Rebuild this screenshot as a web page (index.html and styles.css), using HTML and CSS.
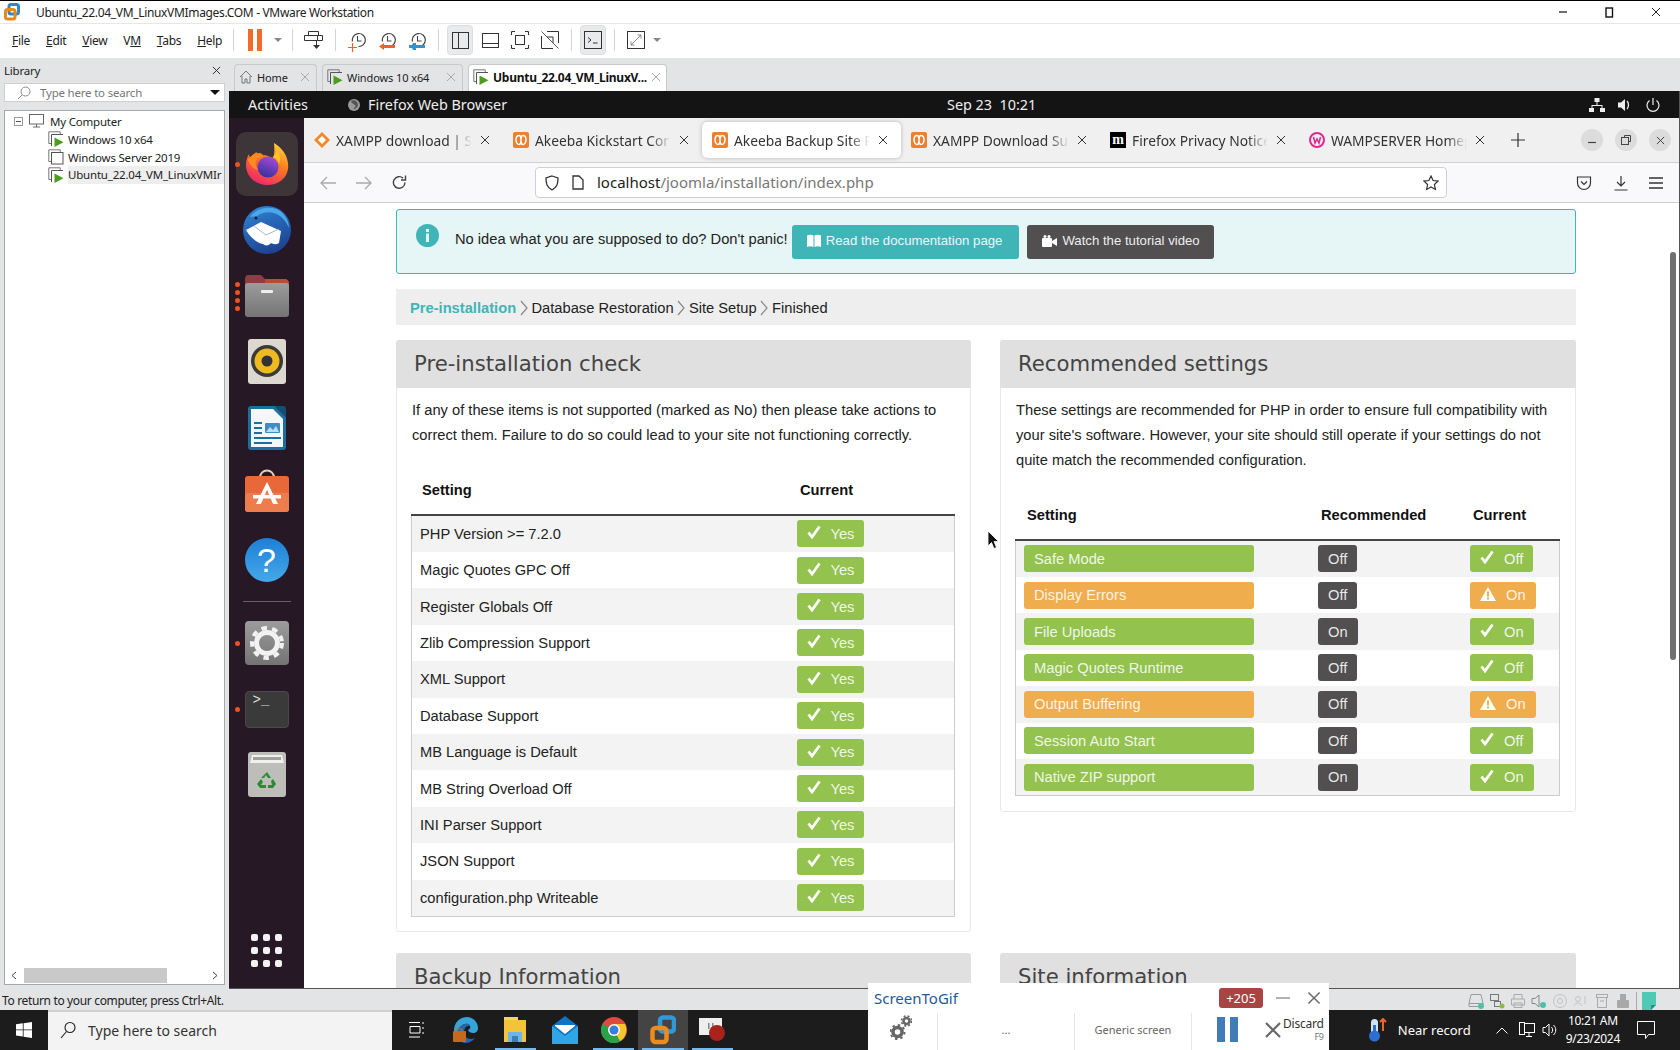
FILE: index.html
```html
<!DOCTYPE html>
<html lang="en">
<head>
  <meta charset="utf-8" />
  <title>Ubuntu_22.04_VM_LinuxVMImages.COM - VMware Workstation</title>
  <link rel="stylesheet" href="styles.css">
</head>
<body>
  <svg class="defs" width="0" height="0">
    <defs>
      <linearGradient id="fxBody" x1="0.8" y1="0" x2="0.3" y2="1">
        <stop offset="0" stop-color="#ffd43a"/><stop offset="0.45" stop-color="#ff7a1f"/><stop offset="1" stop-color="#f0246e"/>
      </linearGradient>
      <linearGradient id="fxGlobe" x1="0.7" y1="0" x2="0.3" y2="1">
        <stop offset="0" stop-color="#a74bd6"/><stop offset="1" stop-color="#35309c"/>
      </linearGradient>
      <linearGradient id="tbBody" x1="0.3" y1="0" x2="0.7" y2="1">
        <stop offset="0" stop-color="#2f7fd0"/><stop offset="1" stop-color="#1c3f8f"/>
      </linearGradient>
      <linearGradient id="greyBox" x1="0" y1="0" x2="0" y2="1">
        <stop offset="0" stop-color="#9c9c9c"/><stop offset="1" stop-color="#747474"/>
      </linearGradient>
      <symbol id="vm-off" viewBox="0 0 16 16">
        <path d="M3.5 12.5H.8V.8h11.4v2.7" fill="none" stroke="#777"/>
        <rect x="3.5" y="3.5" width="11.5" height="11.5" fill="#fff" stroke="#555"/>
      </symbol>
      <symbol id="vm-on" viewBox="0 0 16 16">
        <path d="M3.5 12.5H.8V.8h11.4v2.7" fill="none" stroke="#777"/>
        <path d="M3.5 15V3.5H15" fill="none" stroke="#555"/>
        <path d="M6.5 6.5l9 4.7-9 4.7z" fill="#4d9d1d"/>
      </symbol>
      <symbol id="akeeba" viewBox="0 0 16 16">
        <rect width="16" height="16" rx="2" fill="#ee7f2d"/>
        <path d="M3 8c0-3 1.5-4.5 3-4.5S8 5 8 8s1 4.5 2 4.5S13 11 13 8s-1.5-4.5-3-4.5S8 5 8 8s-1 4.5-2 4.5S3 11 3 8z" fill="none" stroke="#fff" stroke-width="1.5"/>
      </symbol>
      <symbol id="close-x" viewBox="0 0 10 10">
        <path d="M1 1l8 8M9 1L1 9" fill="none" stroke="currentColor" stroke-width="1"/>
      </symbol>
      <symbol id="check" viewBox="0 0 14 14">
        <path d="M1.5 7.5l3.500 4.500L12.500 1.500" fill="none" stroke="#fff" stroke-width="2.800"/>
      </symbol>
      <symbol id="warn" viewBox="0 0 16 14">
        <path d="M8 0l8 14H0z" fill="#fff"/>
        <rect x="7" y="4.5" width="2" height="5" fill="#f0ad4e"/>
        <rect x="7" y="10.5" width="2" height="2" fill="#f0ad4e"/>
      </symbol>
      <symbol id="crumb" viewBox="0 0 8 16">
        <path d="M1 1l6 7-6 7" fill="none" stroke="#888" stroke-width="1.200"/>
      </symbol>
      <symbol id="clock" viewBox="0 0 18 18">
        <path d="M4.5 10.500a6.500 6.500 0 1 1 6 5" fill="none" stroke="#444" stroke-width="1.200"/>
        <path d="M9.5 5v5h4" fill="none" stroke="#444" stroke-width="1.100"/>
      </symbol>
    </defs>
  </svg>

  <div class="vm-title">
    <svg class="vm-logo" width="16" height="18" viewBox="0 0 16 18">
      <rect x="5" y="1.500" width="9.500" height="9.500" rx="2" fill="none" stroke="#2f86c9" stroke-width="3"/>
      <rect x="1.500" y="6.500" width="9.500" height="9.500" rx="2" fill="none" stroke="#e8891e" stroke-width="3"/>
    </svg>
    <span class="vm-title-text">Ubuntu_22.04_VM_LinuxVMImages.COM - VMware Workstation</span>
    <div class="win-btns">
      <svg width="8" height="8" viewBox="0 0 8 8"><path d="M0 4h8" stroke="#111" stroke-width="1.200"/></svg>
      <svg width="10" height="11" viewBox="0 0 10 11"><rect x="2" y="1" width="6.500" height="9" fill="none" stroke="#111" stroke-width="1.400"/></svg>
      <svg width="10" height="10" class="win-x"><use href="#close-x"/></svg>
    </div>
  </div>

  <div class="vm-toolbar">
    <div class="menu">
      <span><u>F</u>ile</span><span><u>E</u>dit</span><span><u>V</u>iew</span><span>V<u>M</u></span><span><u>T</u>abs</span><span><u>H</u>elp</span>
    </div>
    <i class="tb-sep"></i>
    <div class="tb-btn"><svg width="14" height="22" viewBox="0 0 14 22"><path d="M0 0h5v22H0zM9 0h5v22H9z" fill="#f26b2a"/></svg></div>
    <div class="tb-caret tb-caret-wide"></div>
    <i class="tb-sep"></i>
    <div class="tb-btn"><svg width="20" height="20" viewBox="0 0 20 20" fill="none" stroke="#333"><path d="M4.500 5V1.500h10V5M.5 5.500h13v5H.5zM13.500 5.500h5v5h-5z"/><path d="M12.500 11v6" /><path d="M9 15h7l-3.500 4z" fill="#333" stroke="none"/></svg></div>
    <i class="tb-sep"></i>
    <div class="tb-btn tb-clock"><svg width="18" height="18"><use href="#clock"/></svg><svg class="tb-clock-mark" width="9" height="9" viewBox="0 0 9 9"><path d="M4.500 0v9M0 4.500h9" stroke="#e8642a" stroke-width="1.200"/></svg></div>
    <div class="tb-btn tb-clock"><svg width="18" height="18"><use href="#clock"/></svg><svg class="tb-clock-mark tb-mark-wide" width="16" height="7" viewBox="0 0 16 7"><path d="M0 3.500L5 0v2h11v3H5v2z" fill="#e8642a"/></svg></div>
    <div class="tb-btn tb-clock"><svg width="18" height="18"><use href="#clock"/></svg><svg class="tb-clock-mark tb-mark-wide" width="16" height="7" viewBox="0 0 16 7"><path d="M0 2h3l1-2h3v2h9v3H7v2H4L3 5H0z" fill="#2f94d4"/></svg></div>
    <i class="tb-sep"></i>
    <div class="tb-btn tb-on"><svg width="17" height="17" viewBox="0 0 17 17" fill="none" stroke="#333"><rect x=".5" y=".5" width="16" height="16"/><path d="M6.500 .5v16"/></svg></div>
    <div class="tb-btn"><svg width="17" height="15" viewBox="0 0 17 15" fill="none" stroke="#333"><rect x=".5" y=".5" width="16" height="14"/><path d="M.5 10.500h16"/></svg></div>
    <div class="tb-btn"><svg width="18" height="18" viewBox="0 0 18 18" fill="none" stroke="#333"><path d="M.5 4V.5H4M14 .5h3.500V4M17.500 14v3.500H14M4 17.500H.5V14"/><rect x="4.500" y="4.500" width="9" height="9"/></svg></div>
    <div class="tb-btn"><svg width="18" height="18" viewBox="0 0 18 18" fill="none" stroke="#333"><path d="M6 .5h11.500V12M.5 5v12.500H12M6 6h6v6"/><path d="M.5 .5l17 17" stroke="#555"/></svg></div>
    <i class="tb-sep"></i>
    <div class="tb-btn tb-on"><svg width="18" height="18" viewBox="0 0 18 18" fill="none" stroke="#333"><rect x=".5" y=".5" width="17" height="17"/><path d="M4 6.500l3 2.500-3 2.500M9 12h4.500"/></svg></div>
    <i class="tb-sep"></i>
    <div class="tb-btn"><svg width="18" height="18" viewBox="0 0 18 18" fill="none" stroke="#333"><rect x=".5" y=".5" width="17" height="17"/><path d="M4 14L14 4M10.500 4H14v3.500M7.500 14H4v-3.500" stroke="#888"/></svg></div>
    <div class="tb-caret"></div>
  </div>

  <div class="vm-main">
    <aside class="library">
      <div class="lib-head"><span>Library</span><svg width="9" height="9"><use href="#close-x"/></svg></div>
      <div class="lib-search">
        <svg width="14" height="14" viewBox="0 0 14 14" fill="none" stroke="#888"><circle cx="8.500" cy="5.500" r="4.500"/><path d="M5 9l-4 4"/></svg>
        <span>Type here to search</span>
        <i class="lib-caret"></i>
      </div>
      <div class="lib-tree">
        <div class="tree-row tree-root">
          <i class="tree-box"></i>
          <svg width="15" height="14" viewBox="0 0 15 14" fill="none" stroke="#666"><rect x=".5" y=".5" width="14" height="9.500"/><path d="M7.500 10v3M4 13h7"/></svg>
          <span>My Computer</span>
        </div>
        <div class="tree-row"><svg width="16" height="16"><use href="#vm-on"/></svg><span>Windows 10 x64</span></div>
        <div class="tree-row"><svg width="16" height="16"><use href="#vm-off"/></svg><span>Windows Server 2019</span></div>
        <div class="tree-row"><svg width="16" height="16"><use href="#vm-on"/></svg><span class="tree-sel">Ubuntu_22.04_VM_LinuxVMIr</span></div>
        <div class="lib-scroll">
          <svg width="6" height="9" viewBox="0 0 6 9"><path d="M5 1L1 4.500 5 8" fill="none" stroke="#444"/></svg>
          <i class="lib-thumb"></i>
          <svg width="6" height="9" viewBox="0 0 6 9"><path d="M1 1l4 3.500L1 8" fill="none" stroke="#444"/></svg>
        </div>
      </div>
    </aside>

    <section class="vm-area">
      <div class="vm-tabs">
        <div class="vm-tab vm-tab-home">
          <svg width="14" height="14" viewBox="0 0 14 14" fill="none" stroke="#777"><path d="M1 7l6-6 6 6M3 6v7h3V9h2v4h3V6"/></svg>
          <span>Home</span><svg class="vm-tab-x" width="10" height="10"><use href="#close-x"/></svg>
        </div>
        <div class="vm-tab vm-tab-win">
          <svg width="16" height="16"><use href="#vm-on"/></svg>
          <span>Windows 10 x64</span><svg class="vm-tab-x" width="10" height="10"><use href="#close-x"/></svg>
        </div>
        <div class="vm-tab vm-tab-active">
          <svg width="16" height="16"><use href="#vm-on"/></svg>
          <span>Ubuntu_22.04_VM_LinuxV...</span><svg class="vm-tab-x" width="10" height="10"><use href="#close-x"/></svg>
        </div>
      </div>

      <div class="guest">
        <div class="gnome-bar">
          <span class="gnome-act">Activities</span>
          <svg width="14" height="14" viewBox="0 0 14 14"><circle cx="7" cy="7" r="6" fill="#9a9a9a"/><path d="M4 3c3-2 6 0 7 3 0 3-2 5-5 5 2-1 3-3 2-4-1-1-3-1-4-4z" fill="#555"/></svg>
          <span class="gnome-app">Firefox Web Browser</span>
          <span class="gnome-clock">Sep 23&nbsp; 10:21</span>
          <div class="gnome-tray">
            <svg width="16" height="16" viewBox="0 0 16 16" fill="#eee"><rect x="5.500" y="1" width="5" height="4"/><rect x="0" y="11" width="5" height="4"/><rect x="11" y="11" width="5" height="4"/><path d="M7.500 5h1v3h5v3h-1V9H3.500v2h-1V8h5z"/></svg>
            <svg width="16" height="16" viewBox="0 0 16 16" fill="#eee"><path d="M1 5.500h3L8 2v12l-4-3.500H1z"/><path d="M10 4c2 2 2 6 0 8" fill="none" stroke="#eee" stroke-width="1.300"/></svg>
            <svg width="16" height="16" viewBox="0 0 16 16" fill="none" stroke="#eee" stroke-width="1.200"><path d="M8 1v7M4.500 3.500a6 6 0 1 0 7 0"/></svg>
          </div>
        </div>

        <div class="desktop">
          <nav class="dock">
            <div class="dock-item dock-active">
              <i class="run-dots"><b></b></i>
              <svg width="44" height="44" viewBox="0 0 44 44">
                <path d="M29 1c5 3 10 8 12 13 2 5 2.500 9 2 13-1.500 10-10 16-21 16C10 43 1 34 1 23c0-4 1-8 3-11 0 2 1 3 2 4 1-3 3-5 6-6-1 2 0 3 2 4 3-1 8-1 11 1 4 3 5-3 4-14z" fill="url(#fxBody)"/>
                <circle cx="23" cy="25" r="10.500" fill="url(#fxGlobe)"/>
                <path d="M3 18c2-4 6-7 11-7 2 0 4 1 4 3-3 1-6 2-7 5-1 2 0 6 2 9-5-1-8-5-10-10z" fill="#ff8a1f"/>
                <path d="M32 8c3 4 4 9 2 14-1-4-3-6-6-7 2-2 4-4 4-7z" fill="#ffc32c"/>
              </svg>
            </div>
            <div class="dock-item">
              <svg width="48" height="48" viewBox="0 0 48 48">
                <circle cx="24" cy="24" r="24" fill="url(#tbBody)"/>
                <path d="M7 11C12 3 24 0 33 3c8 3 13 11 13 19-3-7-8-13-15-15-6-2-13 0-17 3z" fill="#4aa8e8"/>
                <path d="M3 24L18 16l20 9-2 12c-3 2-6 1-8 0-2 3-6 3-8 1-6-1-13-7-17-14z" fill="#fff"/>
                <path d="M11 20l12 9 13-6" fill="none" stroke="#aeb5c0" stroke-width="1"/>
                <circle cx="13" cy="12" r="1.500" fill="#123"/>
              </svg>
            </div>
            <div class="dock-item">
              <i class="run-dots"><b></b><b></b><b></b><b></b></i>
              <svg width="44" height="42" viewBox="0 0 44 42">
                <path d="M0 4c0-2 1-4 3-4h13l4 4h20c2 0 4 2 4 4v10H0z" fill="#8e3d45"/>
                <path d="M20 4h20c2 0 4 2 4 4v8H20z" fill="#b3502f"/>
                <rect y="8" width="44" height="34" rx="3" fill="url(#greyBox)"/>
                <rect x="16" y="15" width="12" height="3" rx="1" fill="#eee"/>
              </svg>
            </div>
            <div class="dock-item">
              <svg width="38" height="46" viewBox="0 0 38 46">
                <rect width="38" height="45" rx="3" fill="#ddd8cf"/>
                <circle cx="19" cy="22" r="16" fill="#3a3a3a"/>
                <circle cx="19" cy="22" r="12.500" fill="#edbb1f"/>
                <circle cx="19" cy="22" r="5.500" fill="#333"/>
              </svg>
            </div>
            <div class="dock-item">
              <svg width="38" height="44" viewBox="0 0 38 44">
                <path d="M3 0h24l11 11v30c0 2-1 3-3 3H3c-2 0-3-1-3-3V3c0-2 1-3 3-3z" fill="#1a6f9f"/>
                <path d="M3 3h22l10 10v28H3z" fill="#f3f7fa"/>
                <path d="M27 0h8c2 0 3 1 3 3v8z" fill="#134f75"/>
                <rect x="6" y="16" width="8" height="2" fill="#1a6f9f"/><rect x="6" y="21" width="8" height="2" fill="#1a6f9f"/><rect x="6" y="26" width="8" height="2" fill="#1a6f9f"/>
                <rect x="6" y="31" width="27" height="2" fill="#1a6f9f"/><rect x="6" y="36" width="18" height="2" fill="#1a6f9f"/>
                <rect x="17" y="17" width="15" height="10" rx="1" fill="#3d8ec4"/>
                <path d="M18 26l4-5 3 3 3-4 3 6z" fill="#bcdcf0"/>
              </svg>
            </div>
            <div class="dock-item dock-bag">
              <svg width="44" height="44" viewBox="0 0 44 44">
                <path d="M15 9c0-10 14-10 14 0" fill="none" stroke="#e8d2b5" stroke-width="2"/>
                <rect y="7" width="44" height="36" rx="3" fill="#e8683a"/>
                <rect y="24" width="44" height="19" rx="3" fill="#ee7d4e"/>
                <path d="M22 13l-11 22h5l6-14 6 14h5z" fill="#fff"/>
                <path d="M8 26h28v3.500H8z" fill="#fff"/>
              </svg>
            </div>
            <div class="dock-item">
              <div class="help-ball"><span>?</span></div>
            </div>
            <div class="dock-sep"></div>
            <div class="dock-item">
              <i class="run-dots"><b></b></i>
              <svg width="44" height="44" viewBox="0 0 44 44">
                <rect width="44" height="44" rx="4" fill="url(#greyBox)"/>
                <circle cx="22" cy="22" r="10.500" fill="none" stroke="#f2f2f2" stroke-width="5"/>
                <circle cx="22" cy="22" r="15" fill="none" stroke="#f2f2f2" stroke-width="4" stroke-dasharray="5.500 5.280"/>
              </svg>
            </div>
            <div class="dock-item">
              <i class="run-dots"><b></b></i>
              <div class="dock-term"><span>&gt;_</span></div>
            </div>
            <div class="dock-item">
              <svg width="38" height="46" viewBox="0 0 38 46">
                <rect width="38" height="45" rx="3" fill="#bdbdb9"/>
                <path d="M4 3h30l2 8H2z" fill="#f0f0ee"/>
                <rect x="5" y="5" width="28" height="3" fill="#a0a09c"/>
                <path d="M19 20l4 6h-3l-2-3-2 3h-3z" fill="#2c8a32"/>
                <path d="M25 27l3 5-3 4h-5v-3h4l-1-4zM13 27l2 3-2 3h5v3h-6l-3-4z" fill="#2c8a32"/>
              </svg>
            </div>
            <div class="dock-grid"><i></i><i></i><i></i><i></i><i></i><i></i><i></i><i></i><i></i></div>
          </nav>

          <div class="firefox">
            <div class="fx-tabs">
              <div class="fx-tab">
                <svg width="16" height="16" viewBox="0 0 16 16"><path d="M8 0l8 8-8 8-8-8z" fill="#f08a2c"/><path d="M8 4l4 4-4 4-4-4z" fill="#fff"/></svg>
                <span class="fx-label">XAMPP download | Sc</span>
                <svg class="fx-x" width="10" height="10"><use href="#close-x"/></svg>
              </div>
              <div class="fx-tab">
                <svg width="16" height="16"><use href="#akeeba"/></svg>
                <span class="fx-label">Akeeba Kickstart Cor</span>
                <svg class="fx-x" width="10" height="10"><use href="#close-x"/></svg>
              </div>
              <div class="fx-tab fx-tab-active">
                <svg width="16" height="16"><use href="#akeeba"/></svg>
                <span class="fx-label">Akeeba Backup Site R</span>
                <svg class="fx-x" width="10" height="10"><use href="#close-x"/></svg>
              </div>
              <div class="fx-tab">
                <svg width="16" height="16"><use href="#akeeba"/></svg>
                <span class="fx-label">XAMPP Download Su</span>
                <svg class="fx-x" width="10" height="10"><use href="#close-x"/></svg>
              </div>
              <div class="fx-tab">
                <span class="fav-m">m</span>
                <span class="fx-label">Firefox Privacy Notice</span>
                <svg class="fx-x" width="10" height="10"><use href="#close-x"/></svg>
              </div>
              <div class="fx-tab">
                <svg width="16" height="16" viewBox="0 0 16 16"><circle cx="8" cy="8" r="7" fill="none" stroke="#e0288f" stroke-width="2"/><path d="M4.500 5l1.500 6 2-4 2 4 1.500-6" fill="none" stroke="#e0288f" stroke-width="1.500"/></svg>
                <span class="fx-label">WAMPSERVER Homep</span>
                <svg class="fx-x" width="10" height="10"><use href="#close-x"/></svg>
              </div>
              <svg class="fx-plus" width="14" height="14" viewBox="0 0 14 14"><path d="M7 0v14M0 7h14" stroke="#333" stroke-width="1.200"/></svg>
              <div class="fx-win">
                <i><svg width="8" height="8" viewBox="0 0 8 8"><path d="M0 6.500h8" stroke="#444" stroke-width="1.200"/></svg></i>
                <i><svg width="10" height="10" viewBox="0 0 10 10" fill="none" stroke="#444"><path d="M3.500 2V.5h6v6H8"/><rect x=".5" y="2.500" width="7" height="7"/></svg></i>
                <i><svg width="9" height="9" class="fx-win-x"><use href="#close-x"/></svg></i>
              </div>
            </div>

            <div class="fx-nav">
              <svg class="fx-arrow" width="16" height="14" viewBox="0 0 16 14" fill="none" stroke="#aaa" stroke-width="1.300"><path d="M7 1L1 7l6 6M1 7h15"/></svg>
              <svg class="fx-arrow" width="16" height="14" viewBox="0 0 16 14" fill="none" stroke="#aaa" stroke-width="1.300"><path d="M9 1l6 6-6 6M15 7H0"/></svg>
              <svg class="fx-arrow" width="15" height="15" viewBox="0 0 15 15" fill="none" stroke="#444" stroke-width="1.400"><path d="M13 7.500a5.800 5.800 0 1 1-2-4.400"/><path d="M13.500 .5v4.500H9" /></svg>
              <div class="fx-url">
                <svg width="14" height="16" viewBox="0 0 14 16" fill="none" stroke="#333" stroke-width="1.300"><path d="M7 1l6 2c0 6-1 9.500-6 12C2 12.500 1 9 1 3z"/></svg>
                <svg width="12" height="15" viewBox="0 0 12 15" fill="none" stroke="#333" stroke-width="1.300"><path d="M1 1h6l4 4v9H1z"/></svg>
                <span class="fx-host">localhost<em>/joomla/installation/index.php</em></span>
                <svg class="fx-star" width="16" height="16" viewBox="0 0 16 16" fill="none" stroke="#333" stroke-width="1.200"><path d="M8 1l2.100 4.500 4.900.6-3.600 3.400 1 4.900L8 11.900 3.600 14.400l1-4.900L1 6.100l4.900-.6z"/></svg>
              </div>
              <div class="fx-tools">
                <svg width="16" height="16" viewBox="0 0 16 16" fill="none" stroke="#333" stroke-width="1.200"><path d="M1.500 2h13v6a6.500 6.500 0 0 1-13 0z"/><path d="M5 6.500l3 3 3-3"/></svg>
                <svg width="16" height="16" viewBox="0 0 16 16" fill="none" stroke="#333" stroke-width="1.200"><path d="M8 1v10M4 7l4 4 4-4M1.500 15h13"/></svg>
                <svg width="14" height="12" viewBox="0 0 14 12" stroke="#333" stroke-width="1.300"><path d="M0 1h14M0 6h14M0 11h14"/></svg>
              </div>
            </div>

            <main class="page">
              <div class="info-box">
                <svg class="info-icon" width="23" height="23" viewBox="0 0 23 23"><circle cx="11.500" cy="11.500" r="11.500" fill="#40b5b8"/><rect x="10" y="9.500" width="3" height="8.500" fill="#e6f6f6"/><rect x="10" y="5" width="3" height="3" fill="#e6f6f6"/></svg>
                <span class="info-text">No idea what you are supposed to do? Don't panic!</span>
                <a class="btn btn-teal">
                  <svg width="14" height="13" viewBox="0 0 14 13" fill="#fff"><path d="M0 1.500C2 .5 5 .5 6.500 1.500V13C5 12 2 12 0 13zM14 1.500C12 .5 9 .5 7.500 1.500V13C9 12 12 12 14 13z"/></svg>
                  Read the documentation page
                </a>
                <a class="btn btn-dark">
                  <svg width="15" height="12" viewBox="0 0 15 12" fill="#fff"><rect y="3" width="10" height="9" rx="1"/><path d="M10 6l5-3v8l-5-3z"/><circle cx="3" cy="1.500" r="1.500"/><circle cx="7" cy="1.500" r="1.500"/></svg>
                  Watch the tutorial video
                </a>
              </div>

              <div class="crumbs">
                <span class="crumb-on">Pre-installation</span><svg width="8" height="16"><use href="#crumb"/></svg>
                <span>Database Restoration</span><svg width="8" height="16"><use href="#crumb"/></svg>
                <span>Site Setup</span><svg width="8" height="16"><use href="#crumb"/></svg>
                <span>Finished</span>
              </div>

              <div class="panels">
                <section class="panel">
                  <h3>Pre-installation check</h3>
                  <div class="panel-body">
                    <p>If any of these items is not supported (marked as No) then please take actions to correct them. Failure to do so could lead to your site not functioning correctly.</p>
                    <div class="tbl tbl-check">
                      <div class="thead"><b>Setting</b><b>Current</b></div>
                      <div class="tbody">
                        <div class="tr"><span>PHP Version &gt;= 7.2.0</span><span class="tag tag-ok"><svg width="14" height="14"><use href="#check"/></svg>Yes</span></div>
                        <div class="tr"><span>Magic Quotes GPC Off</span><span class="tag tag-ok"><svg width="14" height="14"><use href="#check"/></svg>Yes</span></div>
                        <div class="tr"><span>Register Globals Off</span><span class="tag tag-ok"><svg width="14" height="14"><use href="#check"/></svg>Yes</span></div>
                        <div class="tr"><span>Zlib Compression Support</span><span class="tag tag-ok"><svg width="14" height="14"><use href="#check"/></svg>Yes</span></div>
                        <div class="tr"><span>XML Support</span><span class="tag tag-ok"><svg width="14" height="14"><use href="#check"/></svg>Yes</span></div>
                        <div class="tr"><span>Database Support</span><span class="tag tag-ok"><svg width="14" height="14"><use href="#check"/></svg>Yes</span></div>
                        <div class="tr"><span>MB Language is Default</span><span class="tag tag-ok"><svg width="14" height="14"><use href="#check"/></svg>Yes</span></div>
                        <div class="tr"><span>MB String Overload Off</span><span class="tag tag-ok"><svg width="14" height="14"><use href="#check"/></svg>Yes</span></div>
                        <div class="tr"><span>INI Parser Support</span><span class="tag tag-ok"><svg width="14" height="14"><use href="#check"/></svg>Yes</span></div>
                        <div class="tr"><span>JSON Support</span><span class="tag tag-ok"><svg width="14" height="14"><use href="#check"/></svg>Yes</span></div>
                        <div class="tr"><span>configuration.php Writeable</span><span class="tag tag-ok"><svg width="14" height="14"><use href="#check"/></svg>Yes</span></div>
                      </div>
                    </div>
                  </div>
                </section>

                <section class="panel">
                  <h3>Recommended settings</h3>
                  <div class="panel-body">
                    <p>These settings are recommended for PHP in order to ensure full compatibility with your site's software. However, your site should still operate if your settings do not quite match the recommended configuration.</p>
                    <div class="tbl tbl-rec">
                      <div class="thead"><b>Setting</b><b>Recommended</b><b>Current</b></div>
                      <div class="tbody">
                        <div class="tr"><span class="tag-name tag-ok">Safe Mode</span><span class="tag tag-rec">Off</span><span class="tag tag-ok"><svg width="14" height="14"><use href="#check"/></svg>Off</span></div>
                        <div class="tr"><span class="tag-name tag-warn">Display Errors</span><span class="tag tag-rec">Off</span><span class="tag tag-warn"><svg width="16" height="14"><use href="#warn"/></svg>On</span></div>
                        <div class="tr"><span class="tag-name tag-ok">File Uploads</span><span class="tag tag-rec">On</span><span class="tag tag-ok"><svg width="14" height="14"><use href="#check"/></svg>On</span></div>
                        <div class="tr"><span class="tag-name tag-ok">Magic Quotes Runtime</span><span class="tag tag-rec">Off</span><span class="tag tag-ok"><svg width="14" height="14"><use href="#check"/></svg>Off</span></div>
                        <div class="tr"><span class="tag-name tag-warn">Output Buffering</span><span class="tag tag-rec">Off</span><span class="tag tag-warn"><svg width="16" height="14"><use href="#warn"/></svg>On</span></div>
                        <div class="tr"><span class="tag-name tag-ok">Session Auto Start</span><span class="tag tag-rec">Off</span><span class="tag tag-ok"><svg width="14" height="14"><use href="#check"/></svg>Off</span></div>
                        <div class="tr"><span class="tag-name tag-ok">Native ZIP support</span><span class="tag tag-rec">On</span><span class="tag tag-ok"><svg width="14" height="14"><use href="#check"/></svg>On</span></div>
                      </div>
                    </div>
                  </div>
                </section>

                <section class="panel"><h3>Backup Information</h3></section>
                <section class="panel"><h3>Site information</h3></section>
              </div>
              <i class="fx-scroll"></i>
            </main>
          </div>
        </div>
      </div>
    </section>
  </div>

  <div class="vm-status">
    <span>To return to your computer, press Ctrl+Alt.</span>
    <div class="status-icons">
      <svg width="16" height="16" viewBox="0 0 16 16" fill="none" stroke="#999"><path d="M3 1.500h10l2 9v3H1v-3zM1 10.500h14"/><circle cx="13" cy="13" r="3" fill="#4fc0a8" stroke="none"/></svg>
      <svg width="16" height="16" viewBox="0 0 16 16" fill="none" stroke="#777"><rect x="1.500" y="1.500" width="8" height="6"/><rect x="5.500" y="8.500" width="6" height="5"/><circle cx="13" cy="13" r="2.500" fill="#8fb84a" stroke="none"/></svg>
      <svg width="16" height="16" viewBox="0 0 16 16" fill="none" stroke="#aaa"><path d="M4 6V1.500h8V6M1.500 6h13v6h-13zM4 10h8v4.500H4z"/></svg>
      <svg width="16" height="16" viewBox="0 0 16 16"><path d="M1 5.500h3L8 2v12l-4-3.500H1z" fill="none" stroke="#888"/><circle cx="12" cy="12" r="3" fill="#4fc0a8"/></svg>
      <svg width="16" height="16" viewBox="0 0 16 16" fill="none" stroke="#c4c4c4"><circle cx="8" cy="8" r="6.500"/><circle cx="8" cy="8" r="2.500"/></svg>
      <svg width="16" height="16" viewBox="0 0 16 16" fill="none" stroke="#c4c4c4"><circle cx="5" cy="6" r="2.500"/><path d="M1 13c1-4 7-4 8 0M12 3v8"/></svg>
      <svg width="16" height="16" viewBox="0 0 16 16" fill="none" stroke="#aaa"><rect x="2.500" y="1.500" width="11" height="3"/><path d="M3.500 4.500v10h9v-10M6 8h4"/></svg>
      <svg width="16" height="16" viewBox="0 0 16 16" fill="#a8a8a8"><rect x="5" y="1" width="6" height="6"/><rect x="2" y="7" width="12" height="8" rx="1"/></svg>
      <i class="status-sep"></i>
      <svg width="14" height="18" viewBox="0 0 14 18"><path d="M0 0h14v13l-5 5H0z" fill="#4dc9b4"/><path d="M9 18v-5h5z" fill="#2f8f80"/></svg>
    </div>
  </div>

  <footer class="taskbar">
    <svg class="start" width="16" height="16" viewBox="0 0 16 16" fill="#fff"><path d="M0 2.300l6.800-1v6.200H0zM7.600 1.200L16 0v7.500H7.600zM0 8.300h6.800v6.300l-6.800-1zM7.600 8.300H16V16l-8.400-1.200z"/></svg>
    <div class="task-search">
      <svg width="16" height="18" viewBox="0 0 16 18" fill="none" stroke="#222" stroke-width="1.100"><circle cx="10" cy="6.500" r="5"/><path d="M6.500 10.500L1 17"/></svg>
      <span>Type here to search</span>
    </div>
    <div class="task-apps">
      <div class="task-app">
        <svg width="16" height="18" viewBox="0 0 16 18" fill="none" stroke="#fff"><path d="M0 1.500h11M1 5.500h10v6.500H1zM0 16h11M14 1v2M14 6v2M14 11v2"/></svg>
      </div>
      <div class="task-app">
        <svg width="26" height="28" viewBox="0 0 26 28"><path d="M1 13C2 5 8 1 14 1c6 0 11 5 11 11 0 3-2 5-5 5-4 0-5-3-5-3 3-1 3-5 0-6C10 7 6 11 5 16c-1 3-1 5 0 7-3-2-4-6-4-10z" fill="#35a4d8"/><path d="M5 16c1-5 5-9 10-8 1 0 2 1 2 2-6-1-7 6-5 10 2 3 6 4 10 2-3 4-7 5-10 5-4 0-7-5-7-11z" fill="#2266b8"/><rect x="0" y="15" width="13" height="11" rx="1" fill="#c56a1d"/><rect x="4" y="13" width="5" height="3" fill="none" stroke="#c56a1d"/></svg>
      </div>
      <div class="task-app task-run">
        <svg width="22" height="26" viewBox="0 0 22 26"><rect y="0" width="14" height="6" fill="#f8d264"/><rect y="3" width="22" height="22" fill="#f3c43b"/><rect x="4" y="15" width="14" height="10" fill="#6bb6e6"/><rect x="8" y="19" width="6" height="6" fill="#3a7fb8"/></svg>
      </div>
      <div class="task-app">
        <svg width="26" height="28" viewBox="0 0 26 28"><path d="M13 0l13 10v18H0V10z" fill="#1173c4"/><path d="M0 10l13 10 13-10v18H0z" fill="#2fa6e6"/><path d="M3 10l10 8 10-8v-1H3z" fill="#fff"/></svg>
      </div>
      <div class="task-app task-run">
        <svg width="26" height="26" viewBox="0 0 26 26"><circle cx="13" cy="13" r="13" fill="#dd4b3e"/><path d="M13 13L24 20A13 13 0 0 1 8 25z" fill="#2aa24a"/><path d="M13 7h11a13 13 0 0 1-5 17L13 13z" fill="#f8c52c"/><path d="M13 13L1.500 7A13 13 0 0 0 12 26z" fill="#2aa24a"/><circle cx="13" cy="13" r="6" fill="#fff"/><circle cx="13" cy="13" r="4.500" fill="#3a7fe0"/></svg>
      </div>
      <div class="task-app task-run task-cur">
        <svg width="26" height="30" viewBox="0 0 26 30"><rect x="10" y="2.500" width="14" height="14" rx="3" fill="none" stroke="#2f9ad8" stroke-width="4.500"/><rect x="2.500" y="13" width="14" height="14" rx="3" fill="none" stroke="#ef8a1c" stroke-width="4.500"/></svg>
      </div>
      <div class="task-app task-run">
        <svg width="28" height="26" viewBox="0 0 28 26"><rect x="1" y="1" width="23" height="17" fill="#eee"/><rect x="10" y="6" width="1.500" height="6" fill="#888"/><rect x="14" y="6" width="1.500" height="6" fill="#888"/><circle cx="19" cy="16" r="8" fill="#a8231c"/></svg>
      </div>
    </div>
    <div class="tray">
      <svg width="20" height="24" viewBox="0 0 20 24"><rect x="3" y="1" width="7" height="17" rx="3.500" fill="#cfe2f5"/><circle cx="6.500" cy="18" r="5.500" fill="#2d6fd0"/><rect x="5" y="7" width="3" height="10" fill="#2d6fd0"/><path d="M15 1v12M12 4l3-3 3 3" stroke="#f0662a" stroke-width="2" fill="none"/></svg>
      <span class="tray-weather">Near record</span>
      <svg class="tray-up" width="12" height="7" viewBox="0 0 12 7" fill="none" stroke="#fff"><path d="M.5 6.500L6 1l5.500 5.500"/></svg>
      <svg width="16" height="16" viewBox="0 0 16 16" fill="none" stroke="#fff"><rect x="4.500" y="1.500" width="11" height="9"/><rect x=".5" y=".5" width="5" height="12" fill="#1c1c1c"/><path d="M10 10.500v4M7 14.500h6"/></svg>
      <svg width="16" height="16" viewBox="0 0 16 16" fill="none" stroke="#fff"><path d="M1 5.500h2.500L7 2v12l-3.500-3.500H1zM9.500 5c1.500 2 1.500 4 0 6M11.500 3c3 3 3 7 0 10"/></svg>
      <div class="tray-clock"><span>10:21 AM</span><span>9/23/2024</span></div>
      <svg class="tray-note" width="18" height="18" viewBox="0 0 18 18" fill="none" stroke="#fff"><path d="M.5 .5h17v13h-6l-3 4v-4H.5z"/></svg>
    </div>
  </footer>

  <div class="stg">
    <div class="stg-head">
      <span class="stg-name">ScreenToGif</span>
      <span class="stg-count">+205</span>
      <svg width="14" height="2" viewBox="0 0 14 2"><path d="M0 1h14" stroke="#999" stroke-width="1.500"/></svg>
      <svg class="stg-x" width="14" height="14"><use href="#close-x"/></svg>
    </div>
    <div class="stg-body">
      <div class="stg-cell stg-gear">
        <svg width="22" height="26" viewBox="0 0 22 26"><circle cx="7.500" cy="17" r="4.500" fill="none" stroke="#666" stroke-width="3.500"/><circle cx="7.500" cy="17" r="7" fill="none" stroke="#666" stroke-width="2" stroke-dasharray="2.500 3"/><circle cx="16.500" cy="6" r="3" fill="none" stroke="#666" stroke-width="2.500"/><circle cx="16.500" cy="6" r="5" fill="none" stroke="#666" stroke-width="1.500" stroke-dasharray="2 2"/></svg>
        <span>Options</span>
      </div>
      <div class="stg-cell stg-dots">...</div>
      <div class="stg-cell stg-screen">Generic screen</div>
      <div class="stg-cell stg-rec">
        <div class="stg-pause"><i></i><i></i><span>Pause</span></div>
        <svg class="stg-discard-x" width="16" height="16" viewBox="0 0 16 16"><path d="M1 1l14 14M15 1L1 15" stroke="#666" stroke-width="2.200"/></svg>
        <div class="stg-discard"><span>Discard</span><small>F9</small></div>
      </div>
    </div>
  </div>

  <svg class="mouse" width="13" height="21" viewBox="0 0 13 21"><path d="M1 1v15l3.500-3.500 2.500 6 2.500-1-2.500-6h4.500z" fill="#111" stroke="#fff" stroke-width=".8"/></svg>
</body>
</html>
```

FILE: styles.css
```css
* {
  box-sizing: border-box;
}
html, body {
  height: 100%;
}
body {
  margin: 0;
  width: 1680px;
  height: 1050px;
  overflow: hidden;
  display: flex;
  flex-direction: column;
  font-family: "Noto Sans", sans-serif;
  font-size: 12px;
  color: #222;
  background: #e3e4e6;
  position: relative;
}
i {
  font-style: normal;
}
svg {
  flex: none;
  display: block;
}
.defs {
  position: absolute;
}

/* vmware window */
.vm-title {
  height: 23px;
  background: #fff;
  border-top: 1px solid #000;
  display: flex;
  align-items: center;
  padding-left: 4px;
}
.vm-logo {
  margin-right: 16px;
}
.vm-title-text {
  letter-spacing: -0.33px;
}
.win-btns {
  margin-left: auto;
  display: flex;
  align-items: center;
  gap: 37px;
  padding-right: 19px;
}
.vm-toolbar {
  height: 35px;
  padding-bottom: 2px;
  background: #fff;
  border-top: 1px solid #e6e6e6;
  display: flex;
  align-items: center;
}
.menu {
  width: 227px;
  padding-left: 12px;
  display: flex;
  gap: 16px;
  letter-spacing: -0.3px;
}
.tb-sep {
  width: 1px;
  height: 22px;
  margin: 0 6px;
  background: #d4d4d4;
}
.tb-btn {
  width: 30px;
  height: 30px;
  display: flex;
  align-items: center;
  justify-content: center;
  position: relative;
}
.tb-on {
  width: 26px;
  margin: 0 2px;
  background: #e9eaec;
  border: 1px solid #dcdde0;
  border-radius: 4px;
}
.tb-clock-mark {
  position: absolute;
  left: 6px;
  bottom: 3px;
}
.tb-mark-wide {
  left: 7px;
  bottom: 5px;
}
.tb-caret {
  width: 12px;
  display: flex;
  justify-content: center;
}
.tb-caret-wide {
  width: 16px;
}
.tb-caret::before {
  content: "";
  border-left: 4px solid transparent;
  border-right: 4px solid transparent;
  border-top: 4px solid #888;
}
.vm-main {
  height: 931px;
  display: flex;
  background: #e3e4e6;
}
.library {
  width: 229px;
  padding: 0 4px;
  display: flex;
  flex-direction: column;
  flex: none;
  font-size: 11.5px;
  letter-spacing: -0.2px;
}
.lib-head {
  height: 25px;
  display: flex;
  align-items: center;
  justify-content: space-between;
  padding: 0 4px 0 0;
}
.lib-search {
  width: 221px;
  height: 19px;
  background: #fff;
  border: 1px solid #cfcfcf;
  display: flex;
  align-items: center;
  padding-left: 12px;
  color: #777;
}
.lib-search span {
  margin-left: 9px;
}
.lib-caret {
  margin-left: auto;
  margin-right: 4px;
  border-left: 5px solid transparent;
  border-right: 5px solid transparent;
  border-top: 5px solid #111;
}
.lib-tree {
  width: 221px;
  height: 875px;
  margin-top: 8px;
  background: #fff;
  border: 1px solid #a8a8a8;
  padding-top: 1px;
  position: relative;
  overflow: hidden;
}
.tree-row {
  height: 18px;
  display: flex;
  align-items: center;
  padding-left: 43px;
  gap: 4px;
  white-space: nowrap;
}
.tree-root {
  padding-left: 9px;
  gap: 6px;
}
.tree-box {
  width: 9px;
  height: 9px;
  margin-right: 0;
  border: 1px solid #999;
  position: relative;
}
.tree-box::after {
  content: "";
  position: absolute;
  left: 1px;
  right: 1px;
  top: 3px;
  height: 1px;
  background: #555;
}
.tree-sel {
  flex: 1;
  background: #eee;
  line-height: 18px;
  overflow: hidden;
}
.lib-scroll {
  position: absolute;
  left: 0;
  right: 0;
  bottom: 0;
  height: 17px;
  background: #fff;
  display: flex;
  align-items: center;
  padding: 0 6px;
  gap: 5px;
}
.lib-thumb {
  width: 143px;
  height: 15px;
  margin-right: auto;
  margin-left: 2px;
  background: #c9c9c9;
}

.vm-area {
  flex: 1;
  display: flex;
  flex-direction: column;
  min-width: 0;
}
.vm-tabs {
  height: 33px;
  padding: 6px 0 0 5px;
  display: flex;
  gap: 5px;
}
.vm-tab {
  height: 27px;
  display: flex;
  align-items: center;
  padding: 0 6px 2px 4px;
  gap: 4px;
  background: #e3e4e6;
  border: 1px solid #c9c9c9;
  border-bottom: none;
  border-radius: 4px 4px 0 0;
  font-size: 11px;
  letter-spacing: -0.1px;
  white-space: nowrap;
}
.vm-tab-home {
  width: 83px;
}
.vm-tab-win {
  width: 141px;
}
.vm-tab-active {
  width: 199px;
  background: #fff;
  font-size: 12px;
  font-weight: 700;
  letter-spacing: -0.25px;
  color: #111;
}
.vm-tab-x {
  margin-left: auto;
  color: #aaa;
}
.guest {
  flex: 1;
  min-height: 0;
  border: 1px solid #555;
  border-width: 0 1px 1px 0;
  display: flex;
  flex-direction: column;
  background: #141414;
  overflow: hidden;
}

/* ubuntu shell */
.gnome-bar {
  height: 27px;
  flex: none;
  padding-left: 19px;
  background: #141414;
  color: #eee;
  font-size: 14.4px;
  display: flex;
  align-items: center;
  position: relative;
}
.gnome-act {
  width: 99px;
}
.gnome-app {
  margin-left: 7px;
}
.gnome-clock {
  position: absolute;
  left: 718px;
}
.gnome-tray {
  margin-left: auto;
  display: flex;
  gap: 12px;
  padding-right: 18px;
}
.desktop {
  flex: 1;
  min-height: 0;
  display: flex;
}
.dock {
  width: 75px;
  flex: none;
  padding: 13px 0 21px;
  background: #261824;
  display: flex;
  flex-direction: column;
  align-items: center;
}
.dock-item {
  width: 62px;
  height: 66px;
  flex: none;
  display: flex;
  align-items: center;
  justify-content: center;
  position: relative;
}
.dock-active::before {
  content: "";
  position: absolute;
  inset: 1px 0;
  background: #3e3538;
  border-radius: 10px;
}
.dock-active svg {
  position: relative;
}
.dock-bag svg {
  margin-bottom: 6px;
}
.run-dots {
  position: absolute;
  left: -1px;
  top: 0;
  bottom: 0;
  z-index: 1;
  display: flex;
  flex-direction: column;
  justify-content: center;
  gap: 3px;
}
.run-dots b {
  width: 5px;
  height: 5px;
  border-radius: 50%;
  background: #e95420;
}
.dock-sep {
  width: 48px;
  height: 17px;
  flex: none;
  background: linear-gradient(#6a6068, #6a6068) center / 100% 1px no-repeat;
}
.help-ball {
  width: 44px;
  height: 44px;
  border-radius: 50%;
  background: linear-gradient(#1d80d6, #46a8ea);
  color: #fff;
  font-family: "Liberation Sans", sans-serif;
  font-size: 34px;
  line-height: 44px;
  text-align: center;
}
.dock-term {
  width: 44px;
  height: 37px;
  padding: 1px 0 0 7px;
  border-radius: 4px;
  background: #3a3a3a;
  border: 1px solid #4a4a4a;
  color: #ddd;
  font-family: "Liberation Mono", monospace;
  font-size: 14px;
  line-height: 14px;
}
.dock-grid {
  margin-top: auto;
  width: 31px;
  display: grid;
  grid-template-columns: repeat(3, 7px);
  gap: 6px 4px;
  justify-content: space-between;
}
.dock-grid i {
  height: 7px;
  border-radius: 2px;
  background: #f2f2f2;
}

/* firefox */
.firefox {
  flex: 1;
  min-width: 0;
  display: flex;
  flex-direction: column;
  background: #fff;
}
.fx-tabs {
  height: 44px;
  flex: none;
  display: flex;
  align-items: center;
  background: #f0f0f0;
}
.fx-tab {
  width: 199px;
  height: 36px;
  flex: none;
  padding-left: 10px;
  display: flex;
  align-items: center;
  gap: 6px;
  border-radius: 5px;
  font-size: 13.8px;
  color: #333;
}
.fx-tab-active {
  background: #fff;
  box-shadow: 0 0 4px rgba(0, 0, 0, 0.25);
}
.fx-label {
  width: 136px;
  overflow: hidden;
  white-space: nowrap;
  -webkit-mask-image: linear-gradient(to right, #000 85%, transparent);
  mask-image: linear-gradient(to right, #000 85%, transparent);
}
.fx-x {
  margin-left: 2px;
  color: #333;
}
.fav-m {
  width: 16px;
  height: 16px;
  background: #000;
  color: #fff;
  font-family: "Liberation Serif", serif;
  font-weight: 700;
  font-size: 14px;
  line-height: 15px;
  text-align: center;
}
.fx-plus {
  margin-left: 13px;
}
.fx-win {
  margin-left: auto;
  display: flex;
  gap: 12px;
  padding-right: 8px;
}
.fx-win i {
  width: 22px;
  height: 22px;
  border-radius: 50%;
  background: #dcdcdc;
  display: flex;
  align-items: center;
  justify-content: center;
}
.fx-win-x {
  color: #333;
}
.fx-nav {
  height: 41px;
  flex: none;
  display: flex;
  align-items: center;
  background: #f9f9fb;
  border-top: 1px solid #d0d0d0;
  border-bottom: 1px solid #cfcfcf;
  padding-left: 16px;
}
.fx-arrow {
  margin-right: 20px;
}
.fx-url {
  width: 912px;
  height: 31px;
  margin-left: 108px;
  padding-left: 9px;
  display: flex;
  align-items: center;
  gap: 13px;
  background: #fff;
  border: 1px solid #cfcfd8;
  border-radius: 4px;
  font-size: 15px;
  color: #222;
}
.fx-host {
  padding-bottom: 2px;
}
.fx-host em {
  font-style: normal;
  color: #777;
}
.fx-star {
  margin-left: auto;
  margin-right: 7px;
}
.fx-tools {
  margin-left: auto;
  display: flex;
  align-items: center;
  gap: 20.5px;
  padding-right: 16px;
}

/* restoration page */
.page {
  flex: 1;
  min-height: 0;
  overflow: hidden;
  position: relative;
  padding: 6px 103px 0 92px;
  font-family: "Liberation Sans", sans-serif;
  font-size: 14.7px;
  color: #222;
}
.fx-scroll {
  position: absolute;
  right: 3px;
  top: 49px;
  width: 6px;
  height: 408px;
  border-radius: 3px;
  background: #707070;
}
.info-box {
  height: 65px;
  display: flex;
  align-items: center;
  padding-left: 19px;
  background: #e6f6f6;
  border: 1px solid #40b5b8;
  border-radius: 3px;
}
.info-icon {
  margin-bottom: 12px;
}
.info-text {
  margin: 0 4px 6px 16px;
  white-space: nowrap;
}
.btn {
  height: 34px;
  padding: 0 17px 2px 15px;
  display: flex;
  align-items: center;
  gap: 5px;
  border-radius: 3px;
  color: #fff;
  font-size: 13.2px;
  white-space: nowrap;
}
.btn-teal {
  background: #40b5b8;
  color: #e8f8f8;
}
.btn-dark {
  background: #514f50;
  margin-left: 8px;
  padding-right: 14px;
  color: #eee;
}
.crumbs {
  height: 36px;
  margin-top: 15px;
  padding: 1px 0 0 14px;
  display: flex;
  align-items: center;
  gap: 3.7px;
  background: #eee;
}
.crumb-on {
  color: #40b5b8;
  font-weight: 700;
}
.panels {
  margin-top: 15px;
  display: grid;
  grid-template-columns: 575px 576px;
  gap: 21px 29px;
  align-items: start;
}
.panel {
  border: 1px solid #e8e8e8;
  border-radius: 3px;
}
.panel h3 {
  margin: -1px -1px 0;
  height: 48px;
  padding: 0 18px 1px;
  display: flex;
  align-items: center;
  background: #e0e0e0;
  border-radius: 3px 3px 0 0;
  font-family: "DejaVu Sans", sans-serif;
  font-size: 21.2px;
  font-weight: 400;
  color: #444;
}
.panel-body {
  padding: 10px 15px 14.4px;
}
.panel-body .tbl {
  margin-left: -1px;
}
.panel p {
  margin: 0 0 20px;
  line-height: 25px;
}
.thead {
  height: 47.6px;
  padding-bottom: 2px;
  display: grid;
  align-items: center;
  border-bottom: 2px solid #444;
  color: #111;
}
.tbody {
  border: 1px solid #ccc;
  border-top: none;
}
.tr {
  height: 36.4px;
  display: grid;
  align-items: center;
}
.tr:nth-child(odd) {
  background: #f3f3f3;
}
.tbl-check .thead {
  grid-template-columns: 378px 1fr;
  padding-left: 11px;
}
.tbl-check .tr {
  grid-template-columns: 376.5px 1fr;
  padding-left: 8px;
}
.tbl-rec .thead {
  grid-template-columns: 294px 152px 1fr;
  padding-left: 12px;
}
.tbl-rec .tr {
  grid-template-columns: 294px 152px 1fr;
  padding-left: 8px;
}
.tag,
.tag-name {
  height: 27px;
  display: inline-flex;
  align-items: center;
  justify-self: start;
  padding: 0 10px;
  border-radius: 3px;
  color: rgba(255, 255, 255, 0.88);
  white-space: nowrap;
}
.tag svg {
  margin: 0 10px 3px 0;
}
.tag-name {
  width: 230px;
}
.tag-ok {
  background: #93c34e;
}
.tag-warn {
  background: #f0ad4e;
}
.tag-rec {
  background: #514f50;
}

/* host status and taskbar */
.vm-status {
  height: 21px;
  flex: none;
  padding: 2px 0 0 2px;
  display: flex;
  align-items: center;
  background: #e3e4e6;
  letter-spacing: -0.35px;
}
.status-icons {
  margin-left: auto;
  display: flex;
  align-items: center;
  gap: 5px;
  padding-right: 24px;
}
.status-sep {
  width: 1px;
  height: 18px;
  background: #aaa;
}
.taskbar {
  height: 40px;
  flex: none;
  display: flex;
  align-items: center;
  background: #1c1c1c;
  color: #fff;
}
.start {
  margin: 0 16px;
}
.task-search {
  width: 344px;
  height: 40px;
  padding: 0 0 2px 12px;
  display: flex;
  align-items: center;
  gap: 12px;
  background: #f3f3f3;
  border-top: 2px solid #cfcfcf;
  color: #333;
  font-size: 14px;
}
.task-apps {
  display: flex;
}
.task-app {
  width: 49.3px;
  height: 40px;
  display: flex;
  align-items: center;
  justify-content: center;
  position: relative;
}
.task-run::after {
  content: "";
  position: absolute;
  left: 4px;
  right: 4px;
  bottom: 0;
  height: 2px;
  background: #76b9ed;
}
.task-cur {
  background: #444;
}
.tray {
  margin-left: auto;
  display: flex;
  align-items: center;
  gap: 7px;
  padding-right: 25px;
}
.tray-weather {
  font-size: 13px;
  margin: 0 18.5px 0 3px;
}
.tray-up {
  margin-right: 3.5px;
}
.tray-clock {
  margin: 0 10px 0 1px;
  display: flex;
  flex-direction: column;
  align-items: center;
  letter-spacing: -0.3px;
  line-height: 18px;
}

/* recorder floating window */
.stg {
  position: absolute;
  left: 868px;
  top: 983px;
  width: 461px;
  height: 67px;
  background: #fff;
  overflow: hidden;
}
.stg-head {
  height: 30px;
  padding: 0 8px 0 6px;
  display: flex;
  align-items: center;
  gap: 9px;
}
.stg-name {
  margin-right: auto;
  color: #1d5a96;
  font-size: 15px;
}
.stg-count {
  width: 44px;
  height: 20px;
  margin-right: 4px;
  border-radius: 3px;
  background: #a94442;
  color: #fff;
  font-size: 13px;
  line-height: 20px;
  text-align: center;
}
.stg-x {
  margin-left: 8px;
  color: #666;
}
.stg-body {
  display: flex;
  height: 50px;
}
.stg-cell {
  border-right: 1px solid #e6e6e6;
  display: flex;
  flex-direction: column;
  align-items: center;
  color: #666;
  font-size: 11px;
}
.stg-gear {
  width: 70px;
  padding: 2px 4px 0 0;
  gap: 6px;
  color: #222;
}
.stg-dots {
  width: 137px;
  padding-top: 9px;
}
.stg-screen {
  width: 117px;
  padding-top: 9px;
}
.stg-rec {
  flex: 1;
  flex-direction: row;
  align-items: flex-start;
  border-right: none;
  padding: 4px 0 0 25px;
}
.stg-pause {
  width: 21px;
  display: flex;
  flex-wrap: wrap;
  justify-content: space-between;
  color: #222;
}
.stg-pause i {
  width: 8px;
  height: 25px;
  background: #3f7cb8;
}
.stg-pause span {
  margin-top: 5px;
  margin-left: -6px;
}
.stg-discard-x {
  margin: 5px 2px 0 27px;
}
.stg-discard {
  display: flex;
  flex-direction: column;
  font-size: 12px;
  letter-spacing: -0.2px;
  line-height: 13px;
  color: #333;
}
.stg-discard small {
  align-self: flex-end;
  font-size: 9px;
  color: #777;
}
.mouse {
  position: absolute;
  left: 987px;
  top: 530px;
}
```
